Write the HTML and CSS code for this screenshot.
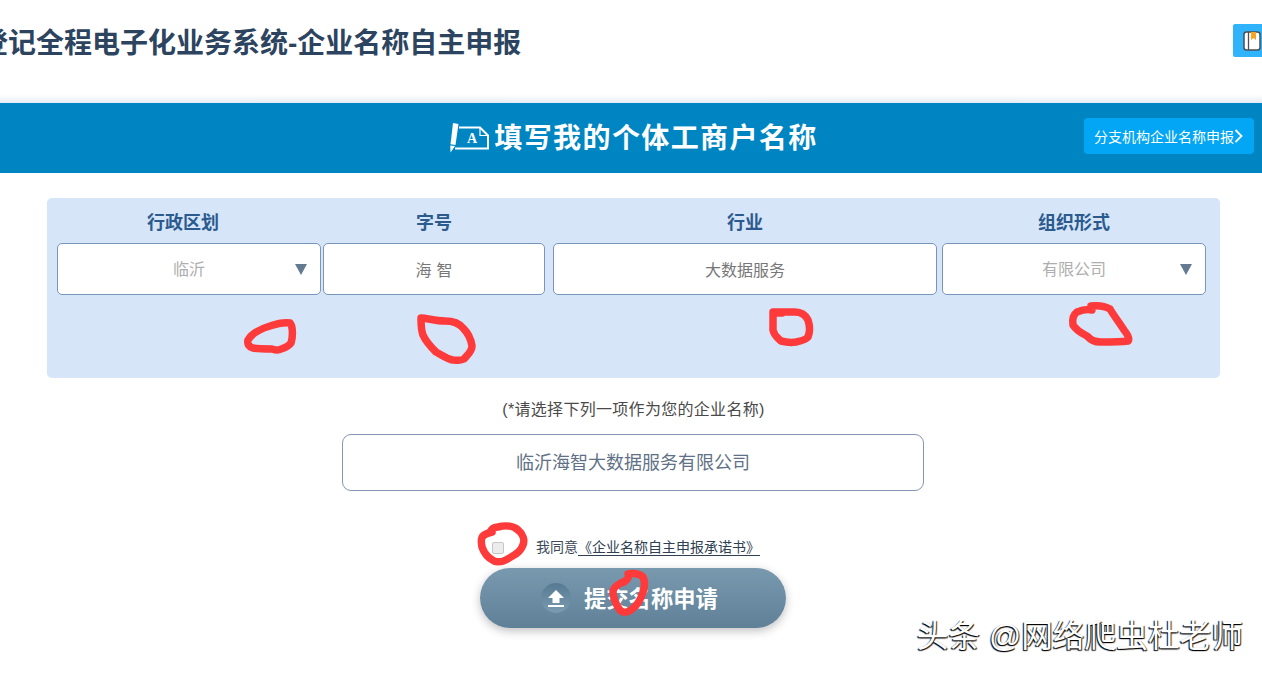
FILE: index.html
```html
<!DOCTYPE html>
<html lang="zh-CN">
<head>
<meta charset="utf-8">
<title>企业名称自主申报</title>
<link rel="stylesheet" href="styles.css">
</head>
<body>
<div class="page">
  <header class="top">
    <h1 class="sys-title">登记全程电子化业务系统-企业名称自主申报</h1>
    <div class="guide-tab">
      <svg class="guide-icon" viewBox="0 0 18 20" width="18" height="20">
        <rect x="1" y="1" width="16" height="18" rx="2.500" fill="#fff" stroke="#4a4f57" stroke-width="1.500"/>
        <path d="M5.500 1v18" stroke="#4a4f57" stroke-width="1.300"/>
        <path d="M8 1h5v8l-2.500-2-2.500 2z" fill="#f5a623"/>
      </svg>
    </div>
  </header>

  <section class="banner">
    <div class="banner-title">
      <svg class="banner-icon" viewBox="0 0 40 32" width="40" height="32">
        <path d="M4 1l5.500 1-3 21-5-.8z" fill="#fff"/>
        <path d="M1.300 23.400l4.700.7-4.500 6.500z" fill="#fff"/>
        <path d="M10 5.500H31l8 8v13H6" fill="none" stroke="#fff" stroke-width="2"/>
        <path d="M31 5.500v8h8" fill="none" stroke="#fff" stroke-width="1.200"/>
        <text x="18" y="21" class="banner-icon-a">A</text>
      </svg>
      <span>填写我的个体工商户名称</span>
    </div>
    <a class="branch-btn">分支机构企业名称申报<svg class="chev" viewBox="0 0 9 14" width="9" height="14"><path d="M1.500 1l6 6-6 6" fill="none" stroke="#fff" stroke-width="1.800"/></svg></a>
  </section>

  <main class="main">
    <section class="panel">
      <div class="field f-region">
        <div class="field-label label-region">行政区划</div>
        <div class="box box-select"><span class="val-muted">临沂</span><i class="caret"></i></div>
      </div>
      <div class="field f-name">
        <div class="field-label">字号</div>
        <div class="box"><span class="val spaced">海智</span></div>
      </div>
      <div class="field f-trade">
        <div class="field-label">行业</div>
        <div class="box"><span class="val">大数据服务</span></div>
      </div>
      <div class="field f-org">
        <div class="field-label">组织形式</div>
        <div class="box box-select"><span class="val-muted">有限公司</span><i class="caret"></i></div>
      </div>
    </section>

    <p class="hint">(*请选择下列一项作为您的企业名称)</p>
    <div class="result">临沂海智大数据服务有限公司</div>

    <div class="agree">
      <input class="check" type="checkbox" disabled>
      <span>我同意<a class="agree-link">《企业名称自主申报承诺书》</a></span>
    </div>

    <button class="submit" type="button">
      <span class="submit-icon">
        <svg viewBox="0 0 20 20" width="20" height="20"><path d="M10 2l8 8h-4.500v5h-7v-5H2z" fill="#fff"/><path d="M2 18h16" stroke="#fff" stroke-width="2"/></svg>
      </span>
      <span>提交名称申请</span>
    </button>
  </main>

  <svg class="scribbles" viewBox="0 0 1262 673" width="1262" height="673" fill="none" stroke="#ff3a3a" stroke-width="7.500" stroke-linecap="round" stroke-linejoin="round">
    <path d="M248 340c4-7 12-11 22-14 6-2 14-4 20-3 3 3 3 14 1 20-3 4-7 5-10 6-3 2-6 1-9 0-7 0-14 0-19-1-4-1-6-4-5-8z"/>
    <path d="M421 318c6 0 14 3 24 3 8 0 14 2 18 7 4 4 8 11 9 18 0 6-5 9-8 13-3 2-6 1-11 1-6-1-11-5-17-8-6-6-10-10-13-17-2-5-2-12-2-17z"/>
    <path d="M773 312c6 0 14 0 22 0 6 0 10 2 13 8 2 6 2 12 0 17-2 3-7 4-12 5-6 1-11 0-15-1-3-3-7-5-8-11 0-6 0-12 0-18 3 1 6 1 9 1"/>
    <path d="M1091 306c8-1 14 0 19 3 4 7 9 13 14 21 4 5 6 9 4 11-8 1-18 1-27 1-7 0-10-2-14-6-6-3-11-6-14-11-1-6 0-10 4-13 5-2 10-3 15-2"/>
    <path d="M490 532c2-4 5-5 8-5 8-2 16-1 20 3 5 4 7 10 5 15-2 6-6 9-12 12-6 4-12 6-17 4-6-3-10-8-12-14-1-5-1-9 1-11 2-2 5-3 9-4"/>
    <path d="M628 574c6-1 12 0 15 3 2 4 2 9 0 15-2 7-6 14-12 18-4 3-9 3-12-1-3-5-6-11-6-17 0-4 4-7 8-9 4-1 6-3 7-5"/>
  </svg>

  <div class="watermark">头条 @网络爬虫杜老师</div>
</div>
</body>
</html>
```

FILE: styles.css
```css
* { box-sizing: border-box; }
html, body { margin: 0; padding: 0; background: #fff; }
body { font-family: "Liberation Sans", "Noto Sans CJK SC", sans-serif; }

.page {
  position: relative;
  width: 1262px;
  height: 673px;
  overflow: hidden;
  display: flex;
  flex-direction: column;
}

.top {
  width: 100%;
  height: 103px;
  flex: none;
  display: flex;
  justify-content: space-between;
  align-items: flex-start;
  background: linear-gradient(to bottom, #fff 92%, #e6ecf5 100%);
}
.sys-title {
  margin: 27px 0 0 -20px;
  font-size: 28px;
  line-height: 34px;
  font-weight: 700;
  color: #2c4460;
  white-space: nowrap;
}
.guide-tab {
  width: 29px;
  height: 33px;
  margin-top: 24px;
  padding: 7px 0 0 10px;
  background: #2fb4fc;
  border-radius: 2px 0 0 2px;
}
.guide-icon { display: block; }

.banner {
  position: relative;
  width: 100%;
  height: 70px;
  flex: none;
  background: #0085c3;
  display: flex;
  align-items: center;
  justify-content: center;
  padding-left: 5px;
}
.banner-title {
  display: flex;
  align-items: center;
  gap: 5px;
  font-size: 28px;
  line-height: 34px;
  font-weight: 700;
  letter-spacing: 1.400px;
  color: #fff;
  margin-top: 2px;
}
.banner-icon { display: block; margin-top: -2px; }
.banner-icon-a { font: 700 14px "Liberation Serif", serif; fill: #fff; }
.branch-btn {
  position: absolute;
  left: 1084px;
  top: 15px;
  width: 170px;
  height: 36px;
  background: #02a6f5;
  border-radius: 4px;
  color: #fff;
  font-size: 14px;
  display: flex;
  align-items: center;
  padding-left: 10px;
  white-space: nowrap;
}
.chev { margin-left: 0; flex: none; }

.main {
  display: flex;
  flex-direction: column;
  align-items: center;
  padding-left: 5px;
}

.panel {
  width: 1173px;
  height: 180px;
  margin-top: 25px;
  flex: none;
  background: #d6e5f8;
  border-radius: 5px;
  padding: 12px 14px 0 10px;
  display: flex;
  align-items: flex-start;
}
.field { flex: none; }
.f-region { width: 264px; margin-right: 2px; }
.f-name { width: 222px; margin-right: 8px; }
.f-trade { width: 384px; margin-right: 5px; }
.f-org { width: 264px; }
.field-label {
  height: 33px;
  line-height: 27px;
  text-align: center;
  font-size: 18px;
  font-weight: 700;
  color: #2b5a8f;
}
.label-region { padding-right: 12px; }
.box {
  position: relative;
  height: 52px;
  background: #fff;
  border: 1px solid #7895bb;
  border-radius: 5px;
  display: flex;
  align-items: center;
  justify-content: center;
  font-size: 16px;
}
.val { color: #777; }
.spaced { letter-spacing: 5px; margin-right: -5px; }
.val-muted { color: #aeaeae; margin-top: -2px; }
.caret {
  position: absolute;
  right: 13px;
  top: 20px;
  width: 0;
  height: 0;
  border-left: 6.500px solid transparent;
  border-right: 6.500px solid transparent;
  border-top: 11px solid #647a92;
}

.hint {
  margin: 22px 0 0;
  height: 20px;
  line-height: 20px;
  font-size: 16px;
  letter-spacing: .3px;
  color: #4a4a4a;
  text-align: center;
}
.result {
  width: 582px;
  height: 57px;
  margin: 14px 0 0 -1px;
  flex: none;
  border: 1px solid #8496b0;
  border-radius: 9px;
  display: flex;
  align-items: center;
  justify-content: center;
  padding-bottom: 4px;
  font-size: 18px;
  color: #5f7186;
}

.agree {
  margin: 45px 0 0 -1px;
  height: 20px;
  display: flex;
  align-items: center;
  font-size: 14px;
  color: #3e4a58;
  width: 306px;
  padding-left: 12px;
}
.check {
  appearance: none;
  width: 12px;
  height: 12px;
  margin: 3px 32px 0 0;
  flex: none;
  background: #ececec;
  border: 1px solid #c6c6c6;
  border-radius: 2px;
}
.agree-link {
  color: #2f4052;
  border-bottom: 1px solid #2f4052;
}

.submit {
  width: 306px;
  height: 60px;
  margin: 12px 0 0 -1px;
  flex: none;
  border: none;
  border-radius: 30px;
  background: linear-gradient(to bottom, #7899ae, #5f8097);
  box-shadow: 0 3px 10px rgba(0, 0, 0, .25);
  color: #fff;
  font: 700 22.300px "Liberation Sans", "Noto Sans CJK SC", sans-serif;
  display: flex;
  align-items: center;
  justify-content: flex-start;
  gap: 13px;
  padding: 0 0 3px 61px;
}
.submit-icon {
  width: 30px;
  height: 30px;
  margin-top: 3px;
  border-radius: 50%;
  background: linear-gradient(to bottom, #567a92, #7a9bb2);
  display: flex;
  align-items: center;
  justify-content: center;
}

.scribbles {
  position: absolute;
  left: 0;
  top: 0;
  pointer-events: none;
}
.watermark {
  position: absolute;
  right: 19px;
  top: 616px;
  font-size: 31.700px;
  line-height: 40px;
  color: #fff;
  text-shadow: -1px 1px 1px #000, 1px 1px 1px #222;
  white-space: nowrap;
}
```
